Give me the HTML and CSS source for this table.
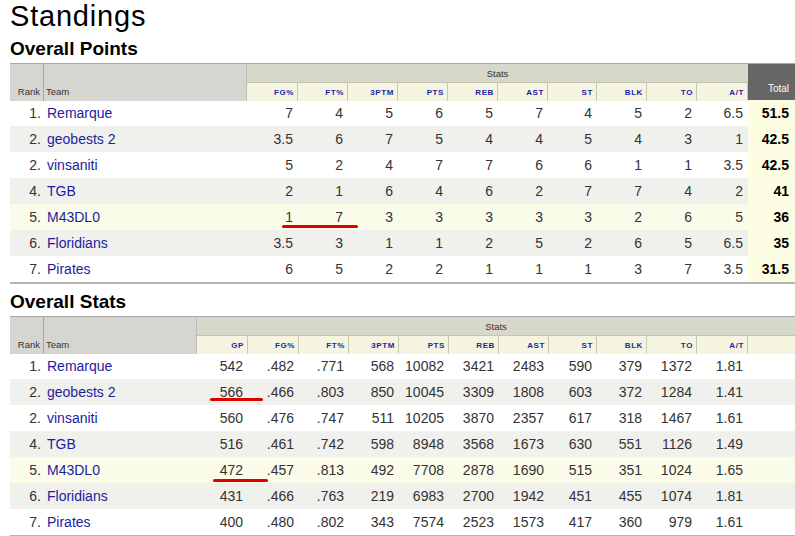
FILE: index.html
```html
<!DOCTYPE html>
<html>
<head>
<meta charset="utf-8">
<title>Standings</title>
<link rel="stylesheet" href="styles.css">
</head>
<body>
<div class="page">
  <h1 class="title">Standings</h1>

  <h2 class="section first">Overall Points</h2>
  <div class="table points">
    <div class="head">
      <div class="h-rank">Rank</div>
      <div class="h-team">Team</div>
      <div class="h-stats">Stats</div>
      <div class="h-total">Total</div>
      <div class="h-col">FG%</div>
      <div class="h-col">FT%</div>
      <div class="h-col">3PTM</div>
      <div class="h-col">PTS</div>
      <div class="h-col">REB</div>
      <div class="h-col">AST</div>
      <div class="h-col">ST</div>
      <div class="h-col">BLK</div>
      <div class="h-col">TO</div>
      <div class="h-col">A/T</div>
    </div>
    <div class="row"><span class="rk">1.</span><a class="tm">Remarque</a><span>7</span><span>4</span><span>5</span><span>6</span><span>5</span><span>7</span><span>4</span><span>5</span><span>2</span><span>6.5</span><span class="tot">51.5</span></div>
    <div class="row alt"><span class="rk">2.</span><a class="tm">geobests 2</a><span>3.5</span><span>6</span><span>7</span><span>5</span><span>4</span><span>4</span><span>5</span><span>4</span><span>3</span><span>1</span><span class="tot">42.5</span></div>
    <div class="row"><span class="rk">2.</span><a class="tm">vinsaniti</a><span>5</span><span>2</span><span>4</span><span>7</span><span>7</span><span>6</span><span>6</span><span>1</span><span>1</span><span>3.5</span><span class="tot">42.5</span></div>
    <div class="row alt"><span class="rk">4.</span><a class="tm">TGB</a><span>2</span><span>1</span><span>6</span><span>4</span><span>6</span><span>2</span><span>7</span><span>7</span><span>4</span><span>2</span><span class="tot">41</span></div>
    <div class="row mine"><span class="rk">5.</span><a class="tm">M43DL0</a><span>1</span><span>7</span><span>3</span><span>3</span><span>3</span><span>3</span><span>3</span><span>2</span><span>6</span><span>5</span><span class="tot">36</span></div>
    <div class="row alt"><span class="rk">6.</span><a class="tm">Floridians</a><span>3.5</span><span>3</span><span>1</span><span>1</span><span>2</span><span>5</span><span>2</span><span>6</span><span>5</span><span>6.5</span><span class="tot">35</span></div>
    <div class="row"><span class="rk">7.</span><a class="tm">Pirates</a><span>6</span><span>5</span><span>2</span><span>2</span><span>1</span><span>1</span><span>1</span><span>3</span><span>7</span><span>3.5</span><span class="tot">31.5</span></div>
  </div>

  <h2 class="section second">Overall Stats</h2>
  <div class="table stats">
    <div class="head">
      <div class="h-rank">Rank</div>
      <div class="h-team">Team</div>
      <div class="h-stats">Stats</div>
      <div class="h-col">GP</div>
      <div class="h-col">FG%</div>
      <div class="h-col">FT%</div>
      <div class="h-col">3PTM</div>
      <div class="h-col">PTS</div>
      <div class="h-col">REB</div>
      <div class="h-col">AST</div>
      <div class="h-col">ST</div>
      <div class="h-col">BLK</div>
      <div class="h-col">TO</div>
      <div class="h-col">A/T</div>
      <div class="h-col blank"></div>
    </div>
    <div class="row"><span class="rk">1.</span><a class="tm">Remarque</a><span>542</span><span>.482</span><span>.771</span><span>568</span><span>10082</span><span>3421</span><span>2483</span><span>590</span><span>379</span><span>1372</span><span>1.81</span><span></span></div>
    <div class="row alt"><span class="rk">2.</span><a class="tm">geobests 2</a><span>566</span><span>.466</span><span>.803</span><span>850</span><span>10045</span><span>3309</span><span>1808</span><span>603</span><span>372</span><span>1284</span><span>1.41</span><span></span></div>
    <div class="row"><span class="rk">2.</span><a class="tm">vinsaniti</a><span>560</span><span>.476</span><span>.747</span><span>511</span><span>10205</span><span>3870</span><span>2357</span><span>617</span><span>318</span><span>1467</span><span>1.61</span><span></span></div>
    <div class="row alt"><span class="rk">4.</span><a class="tm">TGB</a><span>516</span><span>.461</span><span>.742</span><span>598</span><span>8948</span><span>3568</span><span>1673</span><span>630</span><span>551</span><span>1126</span><span>1.49</span><span></span></div>
    <div class="row mine"><span class="rk">5.</span><a class="tm">M43DL0</a><span>472</span><span>.457</span><span>.813</span><span>492</span><span>7708</span><span>2878</span><span>1690</span><span>515</span><span>351</span><span>1024</span><span>1.65</span><span></span></div>
    <div class="row alt"><span class="rk">6.</span><a class="tm">Floridians</a><span>431</span><span>.466</span><span>.763</span><span>219</span><span>6983</span><span>2700</span><span>1942</span><span>451</span><span>455</span><span>1074</span><span>1.81</span><span></span></div>
    <div class="row"><span class="rk">7.</span><a class="tm">Pirates</a><span>400</span><span>.480</span><span>.802</span><span>343</span><span>7574</span><span>2523</span><span>1573</span><span>417</span><span>360</span><span>979</span><span>1.61</span><span></span></div>
  </div>

  <div class="mark mark1"></div>
  <div class="mark mark2"></div>
  <div class="mark mark3"></div>
</div>
</body>
</html>
```

FILE: styles.css
```css
html, body {
  margin: 0;
  padding: 0;
  background: #ffffff;
}

body {
  font-family: "Liberation Sans", Arial, sans-serif;
  color: #333333;
}

.page {
  position: relative;
  padding-left: 10px;
  width: 785px;
}

.title {
  margin: 0;
  font-size: 29px;
  letter-spacing: 0.8px;
  line-height: 33px;
  font-weight: normal;
  color: #000;
}

.section {
  margin: 0;
  font-size: 19px;
  line-height: 22px;
  font-weight: bold;
  color: #000;
}

.section.first {
  margin-top: 5px;
  margin-bottom: 3px;
}

.section.second {
  margin-top: 7px;
  margin-bottom: 3px;
}

.table {
  border-bottom: 2px solid #b4b4b4;
}

.points {
  --cols: 34px 203px 51px 50px 50px 50px 50px 50px 49px 50px 50px 51px 47px;
}

.stats {
  --cols: 34px 153px 51px 51px 50px 50px 50px 50px 50px 48px 50px 50px 51px 47px;
}

.head {
  display: grid;
  grid-template-columns: var(--cols);
  grid-template-rows: 19px 18px;
  font-size: 9.5px;
  color: #333;
  border-top: 1px solid #a8a8a8;
  border-bottom: 1px solid #a8a8a8;
  box-sizing: border-box;
  height: 37px;
}

.h-rank, .h-team {
  grid-row: 1 / 3;
  background: #d6d6d1;
  display: flex;
  align-items: flex-end;
  padding-bottom: 4px;
}

.h-rank {
  justify-content: flex-end;
  padding-right: 3px;
  border-right: 1px solid #a9a9a4;
}

.h-team {
  padding-left: 2px;
  border-right: 1px solid #bdbdb3;
}

.points .h-stats {
  grid-column: 3 / 13;
}

.stats .h-stats {
  grid-column: 3 / 15;
}

.h-stats {
  grid-row: 1;
  background: #d8d8ca;
  border-bottom: 1px solid #c4c4b4;
  display: flex;
  align-items: center;
  justify-content: center;
  padding-top: 1px;
}

.h-total {
  grid-column: 13;
  grid-row: 1 / 3;
  background: #666666;
  color: #ffffff;
  font-size: 10px;
  display: flex;
  align-items: flex-end;
  justify-content: flex-end;
  padding-right: 6px;
  padding-bottom: 7px;
}

.h-col {
  grid-row: 2;
  background: #f4f4e1;
  border-right: 1px solid #c8c8b6;
  color: #1f1fa6;
  font-size: 8px;
  font-weight: bold;
  letter-spacing: 0.6px;
  display: flex;
  align-items: center;
  justify-content: flex-end;
  padding-right: 3px;
}

.h-col.blank {
  border-right: none;
}

.row {
  display: grid;
  grid-template-columns: var(--cols);
  height: 26px;
  line-height: 26px;
  font-size: 14px;
  background: #ffffff;
}

.row.alt {
  background: #f0f0ec;
}

.row.mine {
  background: #fbfbe9;
}

.row span {
  text-align: right;
  padding-right: 5px;
  white-space: nowrap;
}

.row span.rk {
  padding-right: 3px;
}

.row .tm {
  color: #1d1d9e;
  padding-left: 3px;
  text-decoration: none;
  white-space: nowrap;
}

.row span.tot {
  background: #fdfde3;
  color: #000;
  font-weight: bold;
  padding-right: 6px;
}

.mark {
  position: absolute;
  height: 3px;
  border-radius: 2px;
  background: #e00000;
}

.mark1 {
  left: 282px;
  top: 225px;
  width: 76px;
}

.mark2 {
  left: 210px;
  top: 398px;
  width: 53px;
}

.mark3 {
  left: 213px;
  top: 479px;
  width: 55px;
}
```
